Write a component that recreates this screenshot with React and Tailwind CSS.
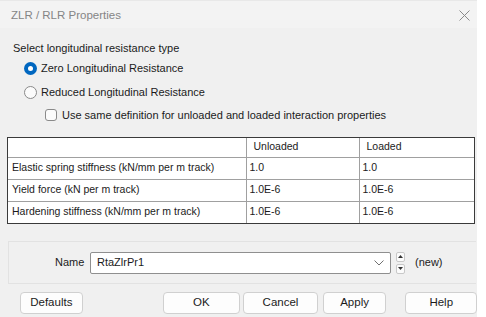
import React from "react";

const font = { fontFamily: '"Liberation Sans", Arial, sans-serif' };

const Btn = ({ children, className }) => (
  <button
    className={`h-[22px] rounded-[4px] border border-[#d0d0d0] bg-[#fdfdfd] text-[11.5px] text-[#1b1b1b] ${className}`}
  >
    {children}
  </button>
);

const rows = [
  ["Elastic spring stiffness (kN/mm per m track)", "1.0", "1.0"],
  ["Yield force (kN per m track)", "1.0E-6", "1.0E-6"],
  ["Hardening stiffness (kN/mm per m track)", "1.0E-6", "1.0E-6"],
];

export default function App() {
  return (
    <div className="w-[486px] h-[317px] bg-white overflow-hidden" style={font}>
      <div className="w-[477px] h-[317px] bg-[#f0f0f0] flex flex-col">
        {/* Title bar */}
        <div className="h-[28px] shrink-0 bg-[#f3f3f3] border-t border-[#e8e8e8] flex items-center justify-between pl-[11px] pr-[7px] pt-[2px]">
          <span className="text-[11.5px] text-[#858585]">ZLR / RLR Properties</span>
          <svg width="11" height="11" viewBox="0 0 11 11">
            <path d="M0.5 0.5L10.5 10.5M10.5 0.5L0.5 10.5" stroke="#8a8a8a" strokeWidth="1" />
          </svg>
        </div>

        {/* Resistance type */}
        <div className="pl-[13px] pt-[12px] text-[11px] text-[#1b1b1b]">
          <div className="h-[16px] leading-[16px]">Select longitudinal resistance type</div>
          <div className="mt-[4px] h-[16px] flex items-center pl-[11px] gap-[4px]">
            <span className="w-[13px] h-[13px] rounded-full bg-[#0067c0] flex items-center justify-center">
              <span className="w-[5px] h-[5px] rounded-full bg-white" />
            </span>
            <span>Zero Longitudinal Resistance</span>
          </div>
          <div className="mt-[8px] h-[16px] flex items-center pl-[11px] gap-[4px]">
            <span className="w-[13px] h-[13px] rounded-full border border-[#8a8a8a] bg-[#fbfbfb]" />
            <span>Reduced Longitudinal Resistance</span>
          </div>
          <div className="mt-[7px] h-[16px] flex items-center pl-[32px] gap-[5px]">
            <span className="w-[12px] h-[12px] rounded-[3px] border border-[#8a8a8a] bg-[#fbfbfb]" />
            <span>Use same definition for unloaded and loaded interaction properties</span>
          </div>
        </div>

        {/* Table */}
        <div className="ml-[7px] mt-[14px] w-[468px] border border-[#3a3a3a] bg-white">
          <table className="w-full border-collapse table-fixed text-[10.5px] text-[#1b1b1b]">
            <colgroup>
              <col className="w-[238px]" />
              <col className="w-[113px]" />
              <col />
            </colgroup>
            <thead>
              <tr className="h-[19px]">
                <th className="border-b border-r border-[#a0a0a0]" />
                <th className="border-b border-r border-[#a0a0a0] text-left font-normal pl-[7px]">Unloaded</th>
                <th className="border-b border-[#a0a0a0] text-left font-normal pl-[7px]">Loaded</th>
              </tr>
            </thead>
            <tbody>
              {rows.map((r, i) => (
                <tr key={i} className="h-[22px]">
                  <td className={`border-r border-[#a0a0a0] pl-[4px] whitespace-nowrap ${i < 2 ? "border-b" : ""}`}>{r[0]}</td>
                  <td className={`border-r border-[#a0a0a0] pl-[3px] ${i < 2 ? "border-b" : ""}`}>{r[1]}</td>
                  <td className={`border-[#a0a0a0] pl-[3px] ${i < 2 ? "border-b" : ""}`}>{r[2]}</td>
                </tr>
              ))}
            </tbody>
          </table>
        </div>

        {/* Name panel */}
        <div className="ml-[8px] mt-[17px] w-[468px] h-[43px] border-t border-l border-b border-[#e2e2e2] flex items-center text-[11px] text-[#1b1b1b]">
          <span className="ml-[46px] w-[28px]">Name</span>
          <div className="ml-[7px] w-[301px] h-[22px] bg-white border border-[#8f8f8f] rounded-[2px] flex items-center justify-between pl-[6px] pr-[6px]">
            <span>RtaZlrPr1</span>
            <svg width="10" height="6" viewBox="0 0 10 6">
              <path d="M0.5 0.5L5 5L9.5 0.5" fill="none" stroke="#707070" strokeWidth="1" />
            </svg>
          </div>
          <div className="ml-[5px] w-[9px] h-[22px] flex flex-col gap-[2px]">
            <div className="flex-1 bg-[#fbfbfb] border border-[#c8c8c8] rounded-[2px] flex items-center justify-center">
              <svg width="5" height="3" viewBox="0 0 5 3"><path d="M0 3L2.5 0L5 3Z" fill="#333" /></svg>
            </div>
            <div className="flex-1 bg-[#fbfbfb] border border-[#c8c8c8] rounded-[2px] flex items-center justify-center">
              <svg width="5" height="3" viewBox="0 0 5 3"><path d="M0 0L2.5 3L5 0Z" fill="#333" /></svg>
            </div>
          </div>
          <span className="ml-[10px]">(new)</span>
        </div>

        {/* Buttons */}
        <div className="mt-[8px] flex items-center">
          <Btn className="ml-[20px] w-[63px]">Defaults</Btn>
          <Btn className="ml-[80px] w-[78px]">OK</Btn>
          <Btn className="ml-[3px] w-[75px]">Cancel</Btn>
          <Btn className="ml-[5px] w-[64px]">Apply</Btn>
          <Btn className="ml-[19px] w-[72px]">Help</Btn>
        </div>
      </div>
    </div>
  );
}
